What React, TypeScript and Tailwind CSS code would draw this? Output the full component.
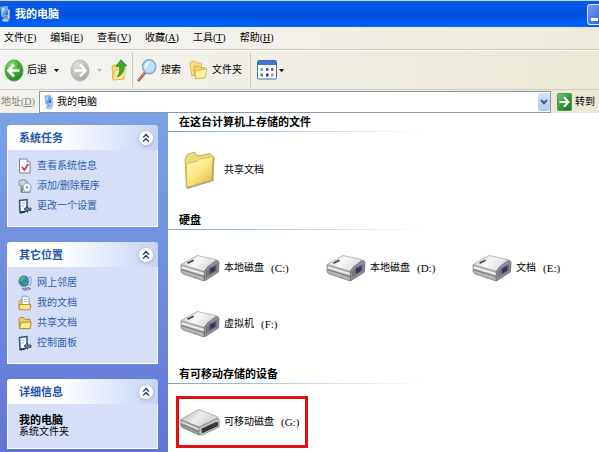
import type { ReactNode } from "react";

type IconProps = { className?: string };

function ComputerIcon({ className }: IconProps) {
  return (
    <svg className={className} viewBox="0 0 12 18" aria-hidden="true">
      <path d="M8 3.5 10.6 4.5V14L8 15.5Z" fill="#c9d3e6" stroke="#7d90b5" strokeWidth="0.5" />
      <path d="M0.8 1.6 8 0.8 8.8 10.6 2 11.8Z" fill="#5aa7f0" stroke="#9cc0ea" strokeWidth="0.9" />
      <path d="M1.8 2.6 5.6 2.1 3 9Z" fill="#b5dcff" />
      <path d="M5.2 9.5 8.3 4.5 8.5 10Z" fill="#1d6fd6" />
      <path d="M3.6 12.2 7 11.4 8 14.2 3.4 15.4Z" fill="#8c9bc4" />
      <ellipse cx="6" cy="15.8" rx="3.8" ry="1.4" fill="#c3cfe6" stroke="#8292b8" strokeWidth="0.5" />
    </svg>
  );
}

function BackIcon({ className }: IconProps) {
  return (
    <svg className={className} viewBox="0 0 20 23" aria-hidden="true">
      <defs>
        <radialGradient id="backFill" cx="0.35" cy="0.25" r="0.85">
          <stop offset="0" stopColor="#8fdc7c" />
          <stop offset="0.5" stopColor="#3fae37" />
          <stop offset="1" stopColor="#1f7f20" />
        </radialGradient>
      </defs>
      <ellipse cx="10" cy="11.5" rx="9" ry="10.6" fill="url(#backFill)" stroke="#4a9a45" strokeWidth="0.8" />
      <path d="M10 5.5 4.5 11.5 10 17.5M5 11.5H15.5" fill="none" stroke="#fff" strokeWidth="2.6" />
    </svg>
  );
}

function ForwardIcon({ className }: IconProps) {
  return (
    <svg className={className} viewBox="0 0 20 23" aria-hidden="true">
      <defs>
        <radialGradient id="forwardFill" cx="0.35" cy="0.25" r="0.85">
          <stop offset="0" stopColor="#dededc" />
          <stop offset="0.6" stopColor="#bdbdbb" />
          <stop offset="1" stopColor="#a2a2a0" />
        </radialGradient>
      </defs>
      <ellipse cx="10" cy="11.5" rx="9" ry="10.6" fill="url(#forwardFill)" stroke="#b4b4b0" strokeWidth="0.8" />
      <path d="M10 5.5 15.5 11.5 10 17.5M15 11.5H4.5" fill="none" stroke="#fff" strokeWidth="2.4" />
    </svg>
  );
}

function UpIcon({ className }: IconProps) {
  return (
    <svg className={className} viewBox="0 0 17 22" aria-hidden="true">
      <path d="M1 7 5 5.5 7 7 13 6.5V20L2 21Z" fill="#f3d768" stroke="#c9a63a" strokeWidth="0.7" />
      <path d="M4 11 15 9 12.5 20 2 21Z" fill="#fbea94" stroke="#d2b04a" strokeWidth="0.6" />
      <path d="M10 0.8 15.8 7H13C13.5 12 11 16 6.5 17.8 8.8 14.5 9.2 11 8.6 7.3H5Z" fill="#3cab35" stroke="#217a20" strokeWidth="0.7" />
    </svg>
  );
}

function SearchIcon({ className }: IconProps) {
  return (
    <svg className={className} viewBox="0 0 20 23" aria-hidden="true">
      <path d="M8.2 13.4 1.8 21" stroke="#a5684a" strokeWidth="3" strokeLinecap="round" />
      <path d="M7.5 13.6 1.6 20.4" stroke="#dba88a" strokeWidth="1" strokeLinecap="round" />
      <ellipse cx="12.2" cy="7.8" rx="6.6" ry="7" fill="#b9e2fa" stroke="#86a5c8" strokeWidth="1.4" />
      <path d="M8 8C8 4.5 10 2.8 13 2.6 11 4.5 10.5 7 8.4 10Z" fill="#fff" opacity="0.85" />
    </svg>
  );
}

function FoldersIcon({ className }: IconProps) {
  return (
    <svg className={className} viewBox="0 0 20 20" aria-hidden="true">
      <path d="M1 3.2 2.5 1H7L8.5 2.8H13V14L3 16Z" fill="#f8df7c" stroke="#d0a93e" strokeWidth="0.8" />
      <path d="M5 8.2 6.5 6H10.5L12 7.5H17V18L7 19.2Z" fill="#f3d468" stroke="#c99f36" strokeWidth="0.8" />
      <path d="M6.5 10.8 19 9 17 18 7 19.2Z" fill="#fdf0a4" stroke="#d0a93e" strokeWidth="0.7" />
    </svg>
  );
}

function ViewsIcon({ className }: IconProps) {
  return (
    <svg className={className} viewBox="0 0 20 20" aria-hidden="true">
      <rect x="0.5" y="0.5" width="19" height="18.5" rx="1" fill="#fff" stroke="#3c6fb8" />
      <rect x="1" y="1" width="18" height="4" fill="#3d78d0" />
      <path d="M3.5 8H6V11H3.5ZM14 13.5H16.5V16.5H14Z" fill="#8a9cb8" />
      <path d="M9 8H11.5V11H9Z" fill="#3a66c8" />
      <path d="M14 8H16.5V11H14Z" fill="#c64a3c" />
      <path d="M3.5 13.5H6V16.5H3.5Z" fill="#2f9a48" />
      <path d="M9 13.5H11.5V16.5H9Z" fill="#2a2f7a" />
    </svg>
  );
}

function GoIcon({ className }: IconProps) {
  return (
    <svg className={className} viewBox="0 0 15 18" aria-hidden="true">
      <defs>
        <linearGradient id="goFill" x1="0" y1="0" x2="1" y2="1">
          <stop offset="0" stopColor="#7cc47a" />
          <stop offset="0.5" stopColor="#389a3c" />
          <stop offset="1" stopColor="#1d7420" />
        </linearGradient>
      </defs>
      <rect x="0.5" y="0.5" width="14" height="17" rx="1" fill="url(#goFill)" stroke="#4f9b51" />
      <path d="M7 4.2 11.5 9 7 13.8M11 9H2.5" fill="none" stroke="#fff" strokeWidth="2" />
    </svg>
  );
}

function InfoIcon() {
  return (
    <svg className="h-4 w-3.5 shrink-0" viewBox="0 0 14 16" aria-hidden="true">
      <path d="M1.5 1H9L12 4V15H1.5Z" fill="#fbfbff" stroke="#7783a6" />
      <path d="M9 1V4H12" fill="#c5cde4" stroke="#7783a6" strokeWidth="0.7" />
      <path d="M4 9 6.3 12 10.3 6" fill="none" stroke="#cc3340" strokeWidth="1.7" />
    </svg>
  );
}

function ProgramsIcon() {
  return (
    <svg className="h-4 w-3.5 shrink-0" viewBox="0 0 14 16" aria-hidden="true">
      <path d="M1 3 5 1.5 9 3V7L5 8.5 1 7Z" fill="#cdd8d6" stroke="#6f8580" strokeWidth="0.8" />
      <path d="M3 8.5H12V14.5H3Z" fill="#dfe8e9" stroke="#6d8790" strokeWidth="0.8" />
      <ellipse cx="9" cy="9.5" rx="4" ry="4.6" fill="#f0f5f7" stroke="#6f8794" strokeWidth="0.8" />
      <ellipse cx="9" cy="9.5" rx="1.2" ry="1.4" fill="#8ba0ad" />
      <path d="M4 14V9.5" stroke="#3b8f55" strokeWidth="1.5" />
    </svg>
  );
}

function SettingsIcon() {
  return (
    <svg className="h-4 w-3.5 shrink-0" viewBox="0 0 14 16" aria-hidden="true">
      <path d="M1.5 2.5 9 1.5V13L2 14.5Z" fill="#f5f8ff" stroke="#37566f" strokeWidth="1.5" />
      <path d="M3.5 5H7M3.5 8H6" stroke="#a9bcd4" />
      <path d="M6 11 9.5 8V10H13V12.5H9.5V14.5Z" fill="#5a7fa8" stroke="#2c4a66" strokeWidth="0.8" />
      <path d="M2 14.5 7 13.8" stroke="#203c50" strokeWidth="1.8" />
    </svg>
  );
}

function NetworkIcon() {
  return (
    <svg className="h-4 w-3.5 shrink-0" viewBox="0 0 14 16" aria-hidden="true">
      <path d="M7 2.5 13 2V10L8 10.5Z" fill="#d5e1f6" stroke="#7a90ba" strokeWidth="0.8" />
      <ellipse cx="5.8" cy="6.2" rx="5" ry="5.4" fill="#2d86cc" stroke="#3f6fa6" strokeWidth="0.6" />
      <path d="M2 3C4 1 6 1.2 7 2.5L5.5 5 3 6 1.5 7Z" fill="#57ba5c" />
      <path d="M5.5 7.5 9.5 6 9 9.5 6.5 11Z" fill="#48a457" />
      <path d="M4 13.5 11 12.5 13 14 6 15.5Z" fill="#a597c6" stroke="#75699c" strokeWidth="0.6" />
    </svg>
  );
}

function DocumentsIcon() {
  return (
    <svg className="h-4 w-3.5 shrink-0" viewBox="0 0 14 16" aria-hidden="true">
      <path d="M1 6 4 4V14.5H1Z" fill="#f0d166" stroke="#b39136" strokeWidth="0.7" />
      <path d="M4 1.2H9L11 3.5V11H4Z" fill="#fcfdff" stroke="#7f8fae" strokeWidth="0.9" />
      <path d="M5.5 4.5H9M5.5 6.5H9.5" stroke="#a8b6d1" strokeWidth="0.8" />
      <path d="M1 9.5H13L12 14.8H1.5Z" fill="#f9e48e" stroke="#a98a36" strokeWidth="0.9" />
    </svg>
  );
}

function SmallFolderIcon() {
  return (
    <svg className="h-4 w-3.5 shrink-0" viewBox="0 0 14 16" aria-hidden="true">
      <path d="M1 4 2.2 2.5H5.5L7 4.3H12V13.5H1.5Z" fill="#f0cf60" stroke="#a3842c" strokeWidth="0.9" />
      <path d="M3 7.3 13.2 7 12 13.7H1.5Z" fill="#fcea96" stroke="#a3842c" strokeWidth="0.9" />
    </svg>
  );
}

function FolderIcon() {
  return (
    <svg className="mx-1 h-10 w-8 shrink-0" viewBox="0 0 32 40" aria-hidden="true">
      <defs>
        <linearGradient id="folderFill" x1="0" y1="0" x2="0.7" y2="1">
          <stop offset="0" stopColor="#fff7b8" />
          <stop offset="0.55" stopColor="#fbe786" />
          <stop offset="1" stopColor="#e9bd48" />
        </linearGradient>
      </defs>
      <path d="M27.5 8.5 30.5 6.5 29.5 31 3.5 39 2.5 37Z" fill="#8d8570" opacity="0.75" />
      <path d="M1 9.5 3 4.5 10.5 2 13.5 6 26 3.5 29 6.5 28 30 2.5 37.5Z" fill="#f1d873" stroke="#b99a44" strokeWidth="0.8" />
      <path d="M2.5 15 4.5 13.3 13.5 11 16 8.8 29 6.5 27.8 30 2.8 37.5Z" fill="url(#folderFill)" stroke="#c7a546" strokeWidth="0.7" />
    </svg>
  );
}

function DiskIcon() {
  return (
    <svg className="h-7 w-10 shrink-0" viewBox="0 0 40 28" aria-hidden="true">
      <defs>
        <linearGradient id="diskTop" x1="0" y1="0" x2="1" y2="0.4">
          <stop offset="0" stopColor="#bdbdbd" />
          <stop offset="0.5" stopColor="#f8f8f8" />
          <stop offset="1" stopColor="#dcdcde" />
        </linearGradient>
      </defs>
      <path d="M1 10.5 24 17.5V27L3 20 1 18Z" fill="#b4b4b6" stroke="#7d7d80" strokeWidth="0.7" />
      <path d="M1.6 13.2 24 20" stroke="#ececec" strokeWidth="2" />
      <path d="M1.6 15.6 24 22.6" stroke="#6c6c70" strokeWidth="0.9" />
      <path d="M1 10.5 17 1.5 36 5.5 25 17.5Z" fill="url(#diskTop)" stroke="#a0a0a3" strokeWidth="0.7" />
      <path d="M24.3 17.2 27.5 12.8 37 6 39 8 38.5 18 24.5 27Z" fill="#8d8d95" stroke="#66666e" strokeWidth="0.7" />
      <path d="M26 18 29 14 37.6 9.5 37.2 16.5 26 23.5Z" fill="#74747e" />
      <path d="M29.8 14.8 35.5 11.5V16.5L29.8 20Z" fill="#35355f" />
      <path d="M7.5 9.3 13.5 6.3" stroke="#444" strokeWidth="1.7" />
      <path d="M15 24.5 16.2 22.5" stroke="#6ca06c" />
    </svg>
  );
}

function RemovableIcon() {
  return (
    <svg className="h-7 w-10 shrink-0" viewBox="0 0 40 28" aria-hidden="true">
      <defs>
        <linearGradient id="removableTop" x1="0" y1="0" x2="1" y2="0.5">
          <stop offset="0" stopColor="#a9a9a9" />
          <stop offset="0.55" stopColor="#ededed" />
          <stop offset="1" stopColor="#d0d0d0" />
        </linearGradient>
      </defs>
      <path d="M0.8 11.5 19 19 19 27 2 19.5 0.8 17.5Z" fill="#9b9b9d" stroke="#727274" strokeWidth="0.7" />
      <path d="M1.5 14 19 21.5" stroke="#dedede" strokeWidth="1.8" />
      <path d="M1.5 16.4 19 24" stroke="#737375" strokeWidth="0.8" />
      <path d="M0.8 11.5 18.5 1.4 37 8.5Q38.5 10 36 11L19.5 19Z" fill="url(#removableTop)" stroke="#9a9a9c" strokeWidth="0.7" />
      <path d="M19 19 36.5 10.5Q39 9.5 39.2 12V19L22 27H19Z" fill="#bcbcbe" stroke="#7d7d7f" strokeWidth="0.7" />
      <path d="M21.5 20.8 35 14.5Q38 13.3 38 15V18L22 25.2Z" fill="#343436" />
    </svg>
  );
}

function Caret({ className }: IconProps) {
  return (
    <svg className={className} viewBox="0 0 5 3" aria-hidden="true">
      <path d="M0 0H5L2.5 3Z" fill="currentColor" />
    </svg>
  );
}

const menus = [
  { label: "文件", hotkey: "F" },
  { label: "编辑", hotkey: "E" },
  { label: "查看", hotkey: "V" },
  { label: "收藏", hotkey: "A" },
  { label: "工具", hotkey: "T" },
  { label: "帮助", hotkey: "H" },
];

const systemTasks = [
  { label: "查看系统信息", icon: <InfoIcon /> },
  { label: "添加/删除程序", icon: <ProgramsIcon /> },
  { label: "更改一个设置", icon: <SettingsIcon /> },
];

const otherPlaces = [
  { label: "网上邻居", icon: <NetworkIcon /> },
  { label: "我的文档", icon: <DocumentsIcon /> },
  { label: "共享文档", icon: <SmallFolderIcon /> },
  { label: "控制面板", icon: <SettingsIcon /> },
];

const disks = [
  { label: "本地磁盘", drive: "(C:)" },
  { label: "本地磁盘", drive: "(D:)" },
  { label: "文档", drive: "(E:)" },
  { label: "虚拟机", drive: "(F:)" },
];

function Hotkey({ letter }: { letter: string }) {
  return (
    <span className="font-['Liberation_Serif',serif]">
      (<span className="underline">{letter}</span>)
    </span>
  );
}

function TaskPanel({ title, children }: { title: string; children: ReactNode }) {
  return (
    <section className="overflow-hidden rounded-t-[3px]">
      <header className="flex h-[25px] items-center justify-between bg-linear-to-r from-white from-35% to-[#c6d3f7] pr-1 pl-3">
        <h2 className="text-[11px] font-bold text-[#1f56a8]">{title}</h2>
        <button
          type="button"
          aria-label={`折叠${title}`}
          className="flex h-4 w-4 items-center justify-center rounded-full border border-[#c0c8e0] bg-white text-[#1c3a7c] shadow-sm"
        >
          <svg className="h-2.5 w-2" viewBox="0 0 8 10" fill="none" stroke="currentColor" strokeWidth="1.4" aria-hidden="true">
            <path d="M1.2 4.4 4 1.6 6.8 4.4M1.2 8.4 4 5.6 6.8 8.4" />
          </svg>
        </button>
      </header>
      <div className="border border-t-0 border-white bg-[#d6dff7]">{children}</div>
    </section>
  );
}

function TaskLinks({ items }: { items: { label: string; icon: ReactNode }[] }) {
  return (
    <ul className="pt-1.5 pb-[10px] pl-[10px]">
      {items.map((item) => (
        <li key={item.label}>
          <a href="#" className="flex h-5 items-center gap-[5px] text-[#2c5fb0]">
            {item.icon}
            {item.label}
          </a>
        </li>
      ))}
    </ul>
  );
}

function Group({ title, children }: { title: string; children: ReactNode }) {
  return (
    <section className="pb-[15px]">
      <h2 className="flex h-[18px] items-center pl-[11px] text-[11px] font-bold">{title}</h2>
      <div className="h-px max-w-64 bg-linear-to-r from-[#70a8d8] to-white" />
      <div className="grid grid-cols-[repeat(3,146px)] gap-y-1 pt-3 pl-2">{children}</div>
    </section>
  );
}

type TileProps = { icon: ReactNode; label: string; drive?: string; marked?: boolean };

function Tile({ icon, label, drive, marked }: TileProps) {
  return (
    <button
      type="button"
      className={`flex h-[52px] w-[132px] items-center gap-1 border-3 pl-px text-left ${
        marked ? "border-[#e60f14]" : "border-transparent"
      }`}
    >
      {icon}
      <span>{label}</span>
      {drive && <span className="pl-[3px] font-['Liberation_Serif',serif] text-[11px]">{drive}</span>}
    </button>
  );
}

export default function App() {
  return (
    <div className="flex h-screen flex-col overflow-hidden bg-white font-['Liberation_Sans','Noto_Sans_CJK_SC',sans-serif] text-[10px] leading-3 text-black">
      {/* Title bar */}
      <div className="flex h-[27px] shrink-0 items-center gap-1 overflow-hidden border-t border-[#c5d6f0] bg-linear-to-b from-[#0a5be8] via-[#0050e0] to-[#0064fb]">
        <ComputerIcon className="h-[18px] w-[11px] shrink-0" />
        <h1 className="text-[11px] font-bold text-white">我的电脑</h1>
        <button
          type="button"
          aria-label="最小化"
          className="-mr-2 ml-auto flex h-[21px] w-5 shrink-0 items-end rounded-[3px] border border-white/80 bg-linear-to-br from-[#7c9df0] to-[#2456d8] pb-[3px] pl-[3px]"
        >
          <span className="h-[3px] w-[7px] bg-white" />
        </button>
      </div>

      {/* Menus */}
      <nav className="flex h-[23px] shrink-0 items-center gap-3.5 border-b border-[#cfccc0] bg-linear-to-r from-[#f5f5f4] to-[#eeeadb] pl-1">
        {menus.map((menu) => (
          <button key={menu.hotkey} type="button" className="whitespace-nowrap">
            {menu.label}
            <Hotkey letter={menu.hotkey} />
          </button>
        ))}
      </nav>

      {/* Toolbar */}
      <div className="flex h-10 shrink-0 items-center border-t border-b border-t-white border-b-[#cfccc0] bg-linear-to-r from-[#f4f4f2] to-[#ece8d6] pl-1">
        <button type="button" className="flex items-center gap-[3px]">
          <BackIcon className="h-[23px] w-5" />
          后退
        </button>
        <button type="button" aria-label="后退记录" className="ml-1.5 p-px">
          <Caret className="h-[3px] w-[5px]" />
        </button>
        <button type="button" aria-label="前进" className="ml-2.5">
          <ForwardIcon className="h-[23px] w-5" />
        </button>
        <button type="button" aria-label="前进记录" className="ml-1.5 p-px text-[#b9b7ac]">
          <Caret className="h-[3px] w-[5px]" />
        </button>
        <button type="button" aria-label="向上" className="ml-2">
          <UpIcon className="h-[22px] w-[17px]" />
        </button>
        <span className="ml-1 h-[34px] w-px bg-[#cdcabd]" />
        <button type="button" className="ml-1 flex items-center gap-1">
          <SearchIcon className="h-[23px] w-5" />
          搜索
        </button>
        <button type="button" className="ml-2 flex items-center gap-1">
          <FoldersIcon className="h-5 w-[19px]" />
          文件夹
        </button>
        <span className="ml-2 h-[34px] w-px bg-[#cdcabd]" />
        <button type="button" aria-label="查看" className="ml-1.5 flex items-center gap-0.5">
          <ViewsIcon className="h-5 w-5" />
          <Caret className="h-[3px] w-[5px]" />
        </button>
      </div>

      {/* Address bar */}
      <div className="flex h-[23px] shrink-0 items-center bg-linear-to-r from-[#f1f0ea] to-[#ece8d6] pr-1">
        <label htmlFor="address" className="w-[39px] shrink-0 pl-px whitespace-nowrap text-[#85837a]">
          地址
          <Hotkey letter="D" />
        </label>
        <div className="flex h-[22px] min-w-0 flex-1 items-center border border-[#8a98ac] bg-white pl-1">
          <ComputerIcon className="h-4 w-[10px] shrink-0" />
          <input id="address" defaultValue="我的电脑" className="min-w-0 flex-1 bg-transparent pl-[3px] outline-none" />
          <button
            type="button"
            aria-label="展开地址列表"
            className="flex h-[18px] w-3 items-center justify-center rounded-[2px] bg-linear-to-b from-[#d5e1fb] to-[#b3c8f2]"
          >
            <svg className="h-1.5 w-2" viewBox="0 0 8 6" fill="none" stroke="#42588c" strokeWidth="2" aria-hidden="true">
              <path d="M1 1 4 4.2 7 1" />
            </svg>
          </button>
        </div>
        <button type="button" className="ml-1.5 flex shrink-0 items-center gap-[3px]">
          <GoIcon className="h-[18px] w-[15px]" />
          转到
        </button>
      </div>

      <div className="flex min-h-0 flex-1">
        {/* Task pane */}
        <aside className="flex w-[168px] shrink-0 flex-col gap-[15px] overflow-hidden bg-linear-to-b from-[#7ba2e7] to-[#6375d6] pt-3 pr-[10px] pl-[7px]">
          <TaskPanel title="系统任务">
            <TaskLinks items={systemTasks} />
          </TaskPanel>
          <TaskPanel title="其它位置">
            <TaskLinks items={otherPlaces} />
          </TaskPanel>
          <TaskPanel title="详细信息">
            <div className="px-[11px] pt-[10px] pb-2.5">
              <p className="text-[11px] font-bold">我的电脑</p>
              <p>系统文件夹</p>
            </div>
          </TaskPanel>
        </aside>

        {/* Drives and folders */}
        <main className="min-w-0 flex-1 overflow-hidden bg-white">
          <Group title="在这台计算机上存储的文件">
            <Tile icon={<FolderIcon />} label="共享文档" />
          </Group>
          <Group title="硬盘">
            {disks.map((disk) => (
              <Tile key={disk.drive} icon={<DiskIcon />} label={disk.label} drive={disk.drive} />
            ))}
          </Group>
          <Group title="有可移动存储的设备">
            <Tile icon={<RemovableIcon />} label="可移动磁盘" drive="(G:)" marked />
          </Group>
        </main>
      </div>
    </div>
  );
}
